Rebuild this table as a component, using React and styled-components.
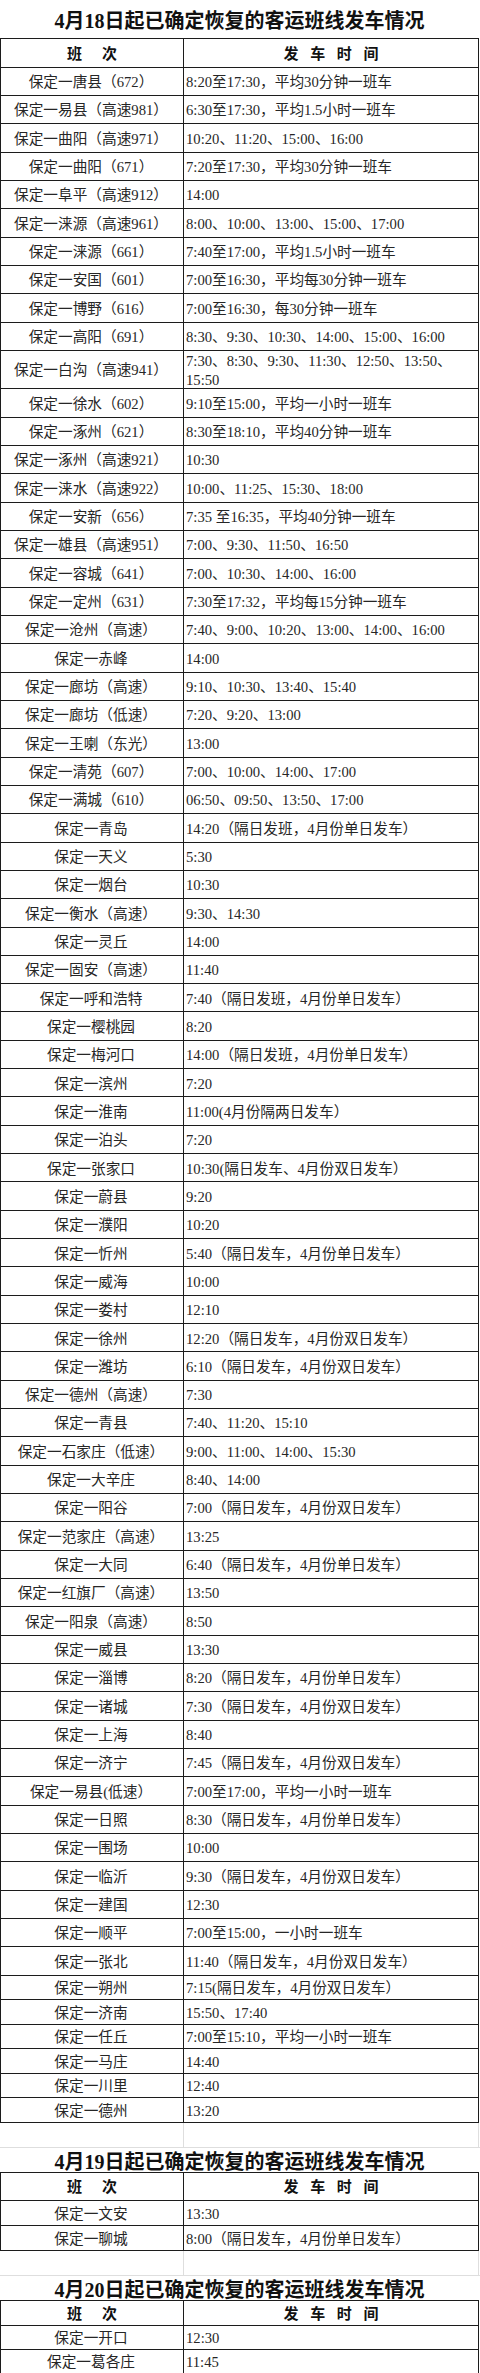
import React from 'react'
import styled, {createGlobalStyle} from "styled-components"

const FONT = `"Liberation Serif", "Noto Sans CJK SC", serif`
const LINE = "#1c1c1c"
const GRID = "#dedede"

// row heights read off the original sheet
const ROW = 28.33
const TALL = 38.33
const SHORT = 24.55

const firstDay = [
    ['保定一唐县（672）', '8:20至17:30，平均30分钟一班车'],
    ['保定一易县（高速981）', '6:30至17:30，平均1.5小时一班车'],
    ['保定一曲阳（高速971）', '10:20、11:20、15:00、16:00'],
    ['保定一曲阳（671）', '7:20至17:30，平均30分钟一班车'],
    ['保定一阜平（高速912）', '14:00'],
    ['保定一涞源（高速961）', '8:00、10:00、13:00、15:00、17:00'],
    ['保定一涞源（661）', '7:40至17:00，平均1.5小时一班车'],
    ['保定一安国（601）', '7:00至16:30，平均每30分钟一班车'],
    ['保定一博野（616）', '7:00至16:30，每30分钟一班车'],
    ['保定一高阳（691）', '8:30、9:30、10:30、14:00、15:00、16:00'],
    ['保定一白沟（高速941）', ['7:30、8:30、9:30、11:30、12:50、13:50、', '15:50'], TALL],
    ['保定一徐水（602）', '9:10至15:00，平均一小时一班车'],
    ['保定一涿州（621）', '8:30至18:10，平均40分钟一班车'],
    ['保定一涿州（高速921）', '10:30'],
    ['保定一涞水（高速922）', '10:00、11:25、15:30、18:00'],
    ['保定一安新（656）', '7:35 至16:35，平均40分钟一班车'],
    ['保定一雄县（高速951）', '7:00、9:30、11:50、16:50'],
    ['保定一容城（641）', '7:00、10:30、14:00、16:00'],
    ['保定一定州（631）', '7:30至17:32，平均每15分钟一班车'],
    ['保定一沧州（高速）', '7:40、9:00、10:20、13:00、14:00、16:00'],
    ['保定一赤峰', '14:00'],
    ['保定一廊坊（高速）', '9:10、10:30、13:40、15:40'],
    ['保定一廊坊（低速）', '7:20、9:20、13:00'],
    ['保定一王喇（东光）', '13:00'],
    ['保定一清苑（607）', '7:00、10:00、14:00、17:00'],
    ['保定一满城（610）', '06:50、09:50、13:50、17:00'],
    ['保定一青岛', '14:20（隔日发班，4月份单日发车）'],
    ['保定一天义', '5:30'],
    ['保定一烟台', '10:30'],
    ['保定一衡水（高速）', '9:30、14:30'],
    ['保定一灵丘', '14:00'],
    ['保定一固安（高速）', '11:40'],
    ['保定一呼和浩特', '7:40（隔日发班，4月份单日发车）'],
    ['保定一樱桃园', '8:20'],
    ['保定一梅河口', '14:00（隔日发班，4月份单日发车）'],
    ['保定一滨州', '7:20'],
    ['保定一淮南', '11:00(4月份隔两日发车）'],
    ['保定一泊头', '7:20'],
    ['保定一张家口', '10:30(隔日发车、4月份双日发车）'],
    ['保定一蔚县', '9:20'],
    ['保定一濮阳', '10:20'],
    ['保定一忻州', '5:40（隔日发车，4月份单日发车）'],
    ['保定一威海', '10:00'],
    ['保定一娄村', '12:10'],
    ['保定一徐州', '12:20（隔日发车，4月份双日发车）'],
    ['保定一潍坊', '6:10（隔日发车，4月份双日发车）'],
    ['保定一德州（高速）', '7:30'],
    ['保定一青县', '7:40、11:20、15:10'],
    ['保定一石家庄（低速）', '9:00、11:00、14:00、15:30'],
    ['保定一大辛庄', '8:40、14:00'],
    ['保定一阳谷', '7:00（隔日发车，4月份双日发车）'],
    ['保定一范家庄（高速）', '13:25'],
    ['保定一大同', '6:40（隔日发车，4月份单日发车）'],
    ['保定一红旗厂（高速）', '13:50'],
    ['保定一阳泉（高速）', '8:50'],
    ['保定一威县', '13:30'],
    ['保定一淄博', '8:20（隔日发车，4月份单日发车）'],
    ['保定一诸城', '7:30（隔日发车，4月份双日发车）'],
    ['保定一上海', '8:40'],
    ['保定一济宁', '7:45（隔日发车，4月份双日发车）'],
    ['保定一易县(低速）', '7:00至17:00，平均一小时一班车'],
    ['保定一日照', '8:30（隔日发车，4月份单日发车）'],
    ['保定一围场', '10:00'],
    ['保定一临沂', '9:30（隔日发车，4月份双日发车）'],
    ['保定一建国', '12:30'],
    ['保定一顺平', '7:00至15:00，一小时一班车'],
    ['保定一张北', '11:40（隔日发车，4月份双日发车）'],
    ['保定一朔州', '7:15(隔日发车，4月份双日发车）', SHORT],
    ['保定一济南', '15:50、17:40', SHORT],
    ['保定一任丘', '7:00至15:10，平均一小时一班车', SHORT],
    ['保定一马庄', '14:40', SHORT],
    ['保定一川里', '12:40', SHORT],
    ['保定一德州', '13:20', SHORT],
]

const secondDay = [
    ['保定一文安', '13:30', 25],
    ['保定一聊城', '8:00（隔日发车，4月份单日发车）', 25],
]

const thirdDay = [
    ['保定一开口', '12:30', 24],
    ['保定一葛各庄', '11:45', 24.4],
]

function Schedule({title, titleHeight, headHeight, rows}) {
    return (
        <section>
            <Title $h={titleHeight}>{title}</Title>
            <Table>
                <Row $h={headHeight}>
                    <HeadCell $gap={20}>{['班', '次'].map(c => <span key={c}>{c}</span>)}</HeadCell>
                    <HeadCell $gap={11.7}>{['发', '车', '时', '间'].map(c => <span key={c}>{c}</span>)}</HeadCell>
                </Row>
                {rows.map(([name, time, h]) => (
                    <Row key={name} $h={h || ROW}>
                        <NameCell>{name}</NameCell>
                        <TimeCell>
                            {Array.isArray(time)
                                ? <span>{time[0]}<br/>{time[1]}</span>
                                : time}
                        </TimeCell>
                    </Row>
                ))}
            </Table>
        </section>
    )
}

function App() {
    return (
        <>
            <GlobalStyle/>
            <Page>
                <Schedule title="4月18日起已确定恢复的客运班线发车情况" titleHeight={38.33} headHeight={28.33} rows={firstDay}/>
                <EmptyRow $h={25.4}><GridCell/><GridCell/></EmptyRow>
                <Schedule title="4月19日起已确定恢复的客运班线发车情况" titleHeight={24} headHeight={27.6} rows={secondDay}/>
                <EmptyRow $h={25}><GridCell/><GridCell/></EmptyRow>
                <Schedule title="4月20日起已确定恢复的客运班线发车情况" titleHeight={24} headHeight={25} rows={thirdDay}/>
            </Page>
        </>
    )
}

const GlobalStyle = createGlobalStyle`
    * {
        box-sizing: border-box;
    }
    body {
        margin: 0;
        background: #fff;
        font-family: ${FONT};
        color: #262626;
    }
`

const Page = styled.div`
    width: 480px;
    background: #fff;
`

const Title = styled.h1`
    margin: 0;
    height: ${p => p.$h}px;
    width: 479px;
    display: flex;
    align-items: center;
    justify-content: center;
    padding-top: 4px;
    font-family: ${FONT};
    font-size: 20px;
    font-weight: 700;
    line-height: 1;
    color: #111;
    white-space: nowrap;
`

const Table = styled.div`
    width: 479px;
    border-top: 1px solid ${LINE};
    border-left: 1px solid ${LINE};
`

const Row = styled.div`
    display: grid;
    grid-template-columns: 183px 295px;
    height: ${p => p.$h}px;
`

const Cell = styled.div`
    display: flex;
    align-items: center;
    border-right: 1px solid ${LINE};
    border-bottom: 1px solid ${LINE};
    padding-top: 2px;
    font-size: 14.67px;
    line-height: 18.5px;
    white-space: nowrap;
    overflow: hidden;
`

const HeadCell = styled(Cell)`
    justify-content: center;
    gap: ${p => p.$gap}px;
    font-size: 15px;
    font-weight: 700;
    color: #111;
`

const NameCell = styled(Cell)`
    justify-content: center;
    padding-right: 2px;
`

const TimeCell = styled(Cell)`
    justify-content: flex-start;
    padding-left: 2px;
`

const EmptyRow = styled.div`
    display: grid;
    grid-template-columns: 184px 295px;
    height: ${p => p.$h}px;
    border-bottom: 1px solid ${GRID};
`

const GridCell = styled.div`
    border-right: 1px solid ${GRID};
`

export default App
